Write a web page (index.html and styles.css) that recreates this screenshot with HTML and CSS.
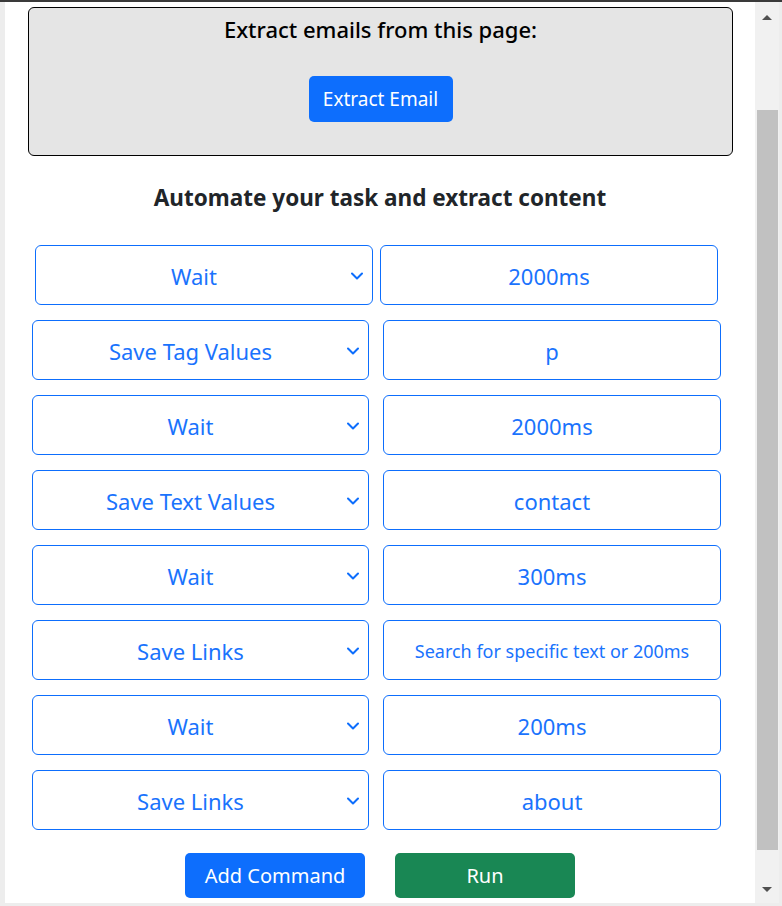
FILE: index.html
```html
<!DOCTYPE html>
<html lang="en">
<head>
    <meta charset="UTF-8">
    <meta name="viewport" content="width=device-width, initial-scale=1.0">
    <title>Email Extractor</title>
    <link rel="stylesheet" href="styles.css">
</head>
<body>
    <div class="topbar"></div>
    <div class="popup">
        <div class="content">
            <div class="extract-box">
                <h3>Extract emails from this page:</h3>
                <button class="btn btn-blue btn-extract">Extract Email</button>
            </div>

            <h4>Automate your task and extract content</h4>

            <div class="commands">
                <div class="row first">
                    <div class="select-wrap">
                        <select><option>Wait</option></select>
                        <svg class="chevron" width="12" height="8" viewBox="0 0 12 8"><path d="M1 1.5l5 5 5-5" fill="none" stroke="#0d6efd" stroke-width="2" stroke-linecap="round" stroke-linejoin="round"/></svg>
                    </div>
                    <input type="text" value="2000ms">
                </div>
                <div class="row">
                    <div class="select-wrap">
                        <select><option>Save Tag Values</option></select>
                        <svg class="chevron" width="12" height="8" viewBox="0 0 12 8"><path d="M1 1.5l5 5 5-5" fill="none" stroke="#0d6efd" stroke-width="2" stroke-linecap="round" stroke-linejoin="round"/></svg>
                    </div>
                    <input type="text" value="p">
                </div>
                <div class="row">
                    <div class="select-wrap">
                        <select><option>Wait</option></select>
                        <svg class="chevron" width="12" height="8" viewBox="0 0 12 8"><path d="M1 1.5l5 5 5-5" fill="none" stroke="#0d6efd" stroke-width="2" stroke-linecap="round" stroke-linejoin="round"/></svg>
                    </div>
                    <input type="text" value="2000ms">
                </div>
                <div class="row">
                    <div class="select-wrap">
                        <select><option>Save Text Values</option></select>
                        <svg class="chevron" width="12" height="8" viewBox="0 0 12 8"><path d="M1 1.5l5 5 5-5" fill="none" stroke="#0d6efd" stroke-width="2" stroke-linecap="round" stroke-linejoin="round"/></svg>
                    </div>
                    <input type="text" value="contact">
                </div>
                <div class="row">
                    <div class="select-wrap">
                        <select><option>Wait</option></select>
                        <svg class="chevron" width="12" height="8" viewBox="0 0 12 8"><path d="M1 1.5l5 5 5-5" fill="none" stroke="#0d6efd" stroke-width="2" stroke-linecap="round" stroke-linejoin="round"/></svg>
                    </div>
                    <input type="text" value="300ms">
                </div>
                <div class="row">
                    <div class="select-wrap">
                        <select><option>Save Links</option></select>
                        <svg class="chevron" width="12" height="8" viewBox="0 0 12 8"><path d="M1 1.5l5 5 5-5" fill="none" stroke="#0d6efd" stroke-width="2" stroke-linecap="round" stroke-linejoin="round"/></svg>
                    </div>
                    <input type="text" class="small" placeholder="Search for specific text or 200ms">
                </div>
                <div class="row">
                    <div class="select-wrap">
                        <select><option>Wait</option></select>
                        <svg class="chevron" width="12" height="8" viewBox="0 0 12 8"><path d="M1 1.5l5 5 5-5" fill="none" stroke="#0d6efd" stroke-width="2" stroke-linecap="round" stroke-linejoin="round"/></svg>
                    </div>
                    <input type="text" value="200ms">
                </div>
                <div class="row">
                    <div class="select-wrap">
                        <select><option>Save Links</option></select>
                        <svg class="chevron" width="12" height="8" viewBox="0 0 12 8"><path d="M1 1.5l5 5 5-5" fill="none" stroke="#0d6efd" stroke-width="2" stroke-linecap="round" stroke-linejoin="round"/></svg>
                    </div>
                    <input type="text" value="about">
                </div>
            </div>

            <div class="actions">
                <button class="btn btn-blue">Add Command</button>
                <button class="btn btn-green">Run</button>
            </div>
        </div>
        <div class="scrollbar">
            <div class="arrow up"></div>
            <div class="track"><div class="thumb"></div></div>
            <div class="arrow down"></div>
        </div>
    </div>
</body>
</html>
```

FILE: styles.css
```css
body {
    margin: 0;
    padding: 0;
    background-color: #ededed;
    font-family: "Noto Sans", "Open Sans", sans-serif;
    overflow: hidden;
}
.topbar {
    height: 2px;
    background-color: #3a3a3a;
}
.popup {
    display: flex;
    margin-left: 5px;
    width: 774px;
    height: 901px;
    background-color: #fff;
    overflow: hidden;
}
.content {
    width: 750px;
    padding-top: 5px;
    text-align: center;
}
.extract-box {
    margin: 0 22px 0 23px;
    height: 149px;
    background-color: #e5e5e5;
    border: 1px solid #000;
    border-radius: 6px;
    padding-top: 7px;
    box-sizing: border-box;
}
h3 {
    margin: 0;
    font-size: 22px;
    line-height: 28px;
    font-weight: 500;
    color: #000;
}
h4 {
    margin: 28px 0 33px;
    font-size: 22.5px;
    line-height: 28px;
    font-weight: 700;
    color: #212529;
}
.btn {
    border: none;
    border-radius: 5px;
    color: #fff;
    font-family: inherit;
    font-size: 20px;
    cursor: pointer;
}
.btn-blue {
    background-color: #0d6efd;
}
.btn-green {
    background-color: #198754;
}
.btn-extract {
    margin-top: 33px;
    width: 144px;
    height: 46px;
    padding: 0;
    font-size: 19px;
}
.commands {
    margin: 0 34px 0 27px;
    display: flex;
    flex-direction: column;
    gap: 15px;
}
.row {
    display: grid;
    grid-template-columns: 337px 338px;
    justify-content: space-between;
    height: 60px;
}
.row.first {
    grid-template-columns: 338px 338px;
    justify-content: center;
    gap: 7px;
}
.select-wrap {
    position: relative;
}
select,
input {
    width: 100%;
    height: 60px;
    box-sizing: border-box;
    border: 1px solid #0d6efd;
    border-radius: 6px;
    background-color: #fff;
    color: #1a73fd;
    font-family: inherit;
    font-size: 22px;
    text-align: center;
    outline: none;
}
select {
    appearance: none;
    -webkit-appearance: none;
    padding: 2px 36px 0 16px;
    text-align-last: center;
}
input {
    padding-top: 2px;
}
input::placeholder {
    color: #1a73fd;
}
input.small {
    font-size: 18px;
}
.chevron {
    position: absolute;
    right: 10px;
    top: 27px;
}
.actions {
    display: flex;
    justify-content: center;
    gap: 30px;
    margin-top: 23px;
}
.actions .btn {
    width: 180px;
    height: 45px;
}
.scrollbar {
    width: 24px;
    background-color: #f1f1f1;
    display: flex;
    flex-direction: column;
}
.arrow {
    height: 31px;
    display: flex;
    justify-content: center;
}
.arrow.up::before,
.arrow.down::before {
    content: "";
    width: 0;
    height: 0;
    border-left: 5px solid transparent;
    border-right: 5px solid transparent;
}
.arrow.up::before {
    margin-top: 13px;
    border-bottom: 5px solid #505050;
}
.arrow.down::before {
    margin-top: 15px;
    border-top: 5px solid #505050;
}
.track {
    flex: 1;
    padding: 77px 1px 22px 2px;
    display: flex;
}
.thumb {
    flex: 1;
    background-color: #c1c1c1;
}
```
